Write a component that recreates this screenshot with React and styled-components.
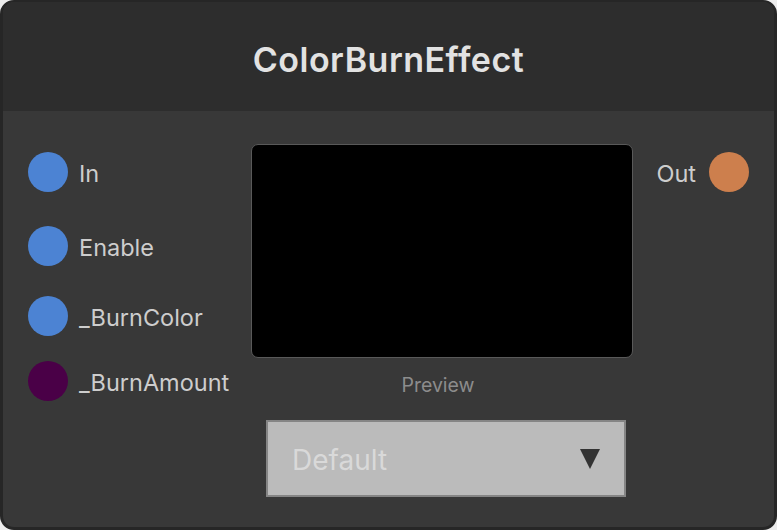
import React from "react";
import styled, { createGlobalStyle } from "styled-components";

const Global = createGlobalStyle`
  html, body {
    margin: 0;
    padding: 0;
    background: #ececec;
  }
  body {
    font-family: Inter, "Noto Sans", "Liberation Sans", sans-serif;
  }
`;

const Node = styled.div`
  box-sizing: border-box;
  width: 777px;
  height: 530px;
  border: 3px solid #262626;
  border-top-width: 2px;
  border-radius: 14px;
  background: #383838;
  overflow: hidden;
  display: flex;
  flex-direction: column;
`;

const Header = styled.div`
  height: 109px;
  flex: none;
  background: #2d2d2d;
  display: flex;
  align-items: center;
  justify-content: center;
  padding-top: 6px;
  box-sizing: border-box;
`;

const Title = styled.div`
  color: #e2e2e2;
  font-size: 34px;
  font-weight: 600;
  letter-spacing: 0.5px;
  line-height: 1;
`;

const Body = styled.div`
  flex: 1;
  display: grid;
  grid-template-columns: 223px 382px 1fr;
  padding: 0 25px 0 25px;
`;

const PortColumn = styled.div`
  display: flex;
  flex-direction: column;
  padding-top: 41px;
`;

const Port = styled.div`
  display: flex;
  align-items: center;
  justify-content: ${(p) => (p.$right ? "flex-end" : "flex-start")};
  gap: ${(p) => (p.$right ? 13 : 11)}px;
  height: 40px;
  margin-top: ${(p) => p.$offset || 0}px;
`;

const Dot = styled.div`
  width: 40px;
  height: 40px;
  border-radius: 50%;
  background: ${(p) => p.$color};
  flex: none;
`;

const PortLabel = styled.span`
  color: #cdcdcd;
  font-size: 23.5px;
  line-height: 1;
  padding-top: 4px;
`;

const Center = styled.div`
  display: flex;
  flex-direction: column;
  padding-top: 33px;
`;

const Preview = styled.div`
  box-sizing: border-box;
  width: 382px;
  height: 214px;
  background: #000;
  border: 1px solid #595959;
  border-radius: 7px;
`;

const Caption = styled.div`
  text-align: center;
  color: #8c8c8c;
  font-size: 19.5px;
  margin-top: 15px;
  padding-right: 8px;
`;

const Select = styled.div`
  box-sizing: border-box;
  width: 360px;
  height: 77px;
  margin: 23px 0 0 15px;
  background: #bbbbbb;
  border: 2px solid #858585;
  display: flex;
  align-items: center;
  justify-content: space-between;
  padding: 0 24px 0 24px;
`;

const SelectText = styled.span`
  color: #d9d9d9;
  font-size: 28px;
  padding-top: 2px;
`;

const Arrow = styled.svg`
  width: 20px;
  height: 21px;
  margin-bottom: 1px;
`;

const RightColumn = styled.div`
  display: flex;
  flex-direction: column;
  padding-top: 41px;
`;

const inputs = [
  { name: "In", color: "#4c83d3", offset: 0 },
  { name: "Enable", color: "#4c83d3", offset: 34 },
  { name: "_BurnColor", color: "#4c83d3", offset: 30 },
  { name: "_BurnAmount", color: "#4a0047", offset: 25 },
];

export default function App() {
  return (
    <>
      <Global />
      <Node>
        <Header>
          <Title>ColorBurnEffect</Title>
        </Header>
        <Body>
          <PortColumn>
            {inputs.map((p) => (
              <Port key={p.name} $offset={p.offset}>
                <Dot $color={p.color} />
                <PortLabel>{p.name}</PortLabel>
              </Port>
            ))}
          </PortColumn>
          <Center>
            <Preview />
            <Caption>Preview</Caption>
            <Select>
              <SelectText>Default</SelectText>
              <Arrow viewBox="0 0 20 21">
                <polygon points="0,1 20,1 10,21" fill="#333333" />
              </Arrow>
            </Select>
          </Center>
          <RightColumn>
            <Port $right>
              <PortLabel>Out</PortLabel>
              <Dot $color="#cd7f4d" />
            </Port>
          </RightColumn>
        </Body>
      </Node>
    </>
  );
}
